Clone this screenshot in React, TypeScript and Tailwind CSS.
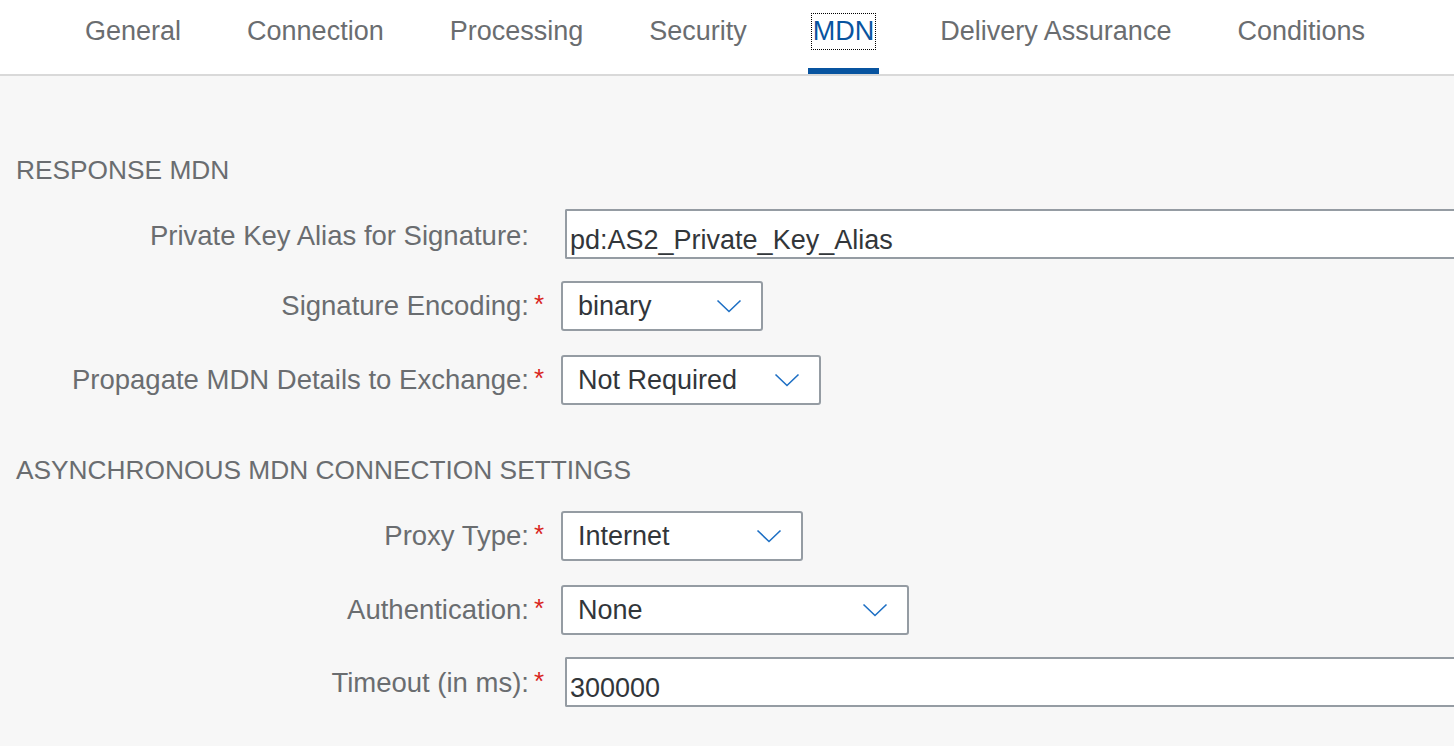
import React from "react";

const FONT = { fontFamily: '"Liberation Sans", Arial, sans-serif' };

const tabs = ["General", "Connection", "Processing", "Security", "MDN", "Delivery Assurance", "Conditions"];

function Chevron() {
  return (
    <svg width="26" height="14" viewBox="0 0 26 14" fill="none">
      <polyline points="1.5,1.5 13,12.5 24.5,1.5" stroke="#1d6fc4" strokeWidth="1.6" strokeLinejoin="miter" />
    </svg>
  );
}

function Label({ text, required = true, offset = 0 }: { text: string; required?: boolean; offset?: number }) {
  return (
    <div className="flex items-center" style={offset ? { paddingTop: offset } : undefined}>
      <div className="w-[529px] text-right text-[27.5px] text-[#6a6d70] leading-[32px] whitespace-nowrap">{text}</div>
      <div className="w-[32px] pl-[5px] h-[32px] flex items-start">
        {required ? <span className="text-[#d9251d] text-[26px] leading-[28px]">*</span> : null}
      </div>
    </div>
  );
}

function Select({ value, width }: { value: string; width: number }) {
  return (
    <div
      className="h-[50px] bg-white border-2 border-[#959ca3] rounded-[3px] flex items-center justify-between pl-[15px] pr-[19px]"
      style={{ width }}
    >
      <span className="text-[27px] text-[#32363a] leading-[32px]">{value}</span>
      <Chevron />
    </div>
  );
}

function TextInput({ value }: { value: string }) {
  return (
    <div className="ml-[4px] flex-1 h-[50px] bg-white border-2 border-r-0 border-[#959ca3] rounded-l-[2px] flex items-center pl-[3px] pt-[12px]">
      <span className="text-[27px] text-[#32363a] leading-[32px] whitespace-nowrap">{value}</span>
    </div>
  );
}

export default function App() {
  return (
    <div className="w-[1454px] h-[746px] overflow-hidden bg-[#f7f7f7]" style={FONT}>
      <div className="h-[76px] bg-white border-b-2 border-[#d9d9d9] flex pl-[80px] gap-[56px]">
        {tabs.map((t) => {
          const active = t === "MDN";
          return (
            <div key={t} className="relative h-[74px] px-[5px] flex items-start pt-[14px]">
              {active ? (
                <span className="text-[27px] leading-[35px] text-[#0854a0] outline-1 outline-dotted outline-black px-[1px] -mx-[1px]">
                  {t}
                </span>
              ) : (
                <span className="text-[27px] leading-[35px] text-[#6a6d70] whitespace-nowrap">{t}</span>
              )}
              {active ? <div className="absolute left-0 right-0 bottom-0 h-[6px] bg-[#0854a0]" /> : null}
            </div>
          );
        })}
      </div>

      <div className="pt-[78px]">
        <div className="pl-[16px] h-[32px] text-[26.3px] leading-[32px] text-[#6a6d70]">RESPONSE MDN</div>

        <div className="mt-[23px] h-[50px] flex items-center">
          <Label text="Private Key Alias for Signature:" required={false} offset={4} />
          <TextInput value="pd:AS2_Private_Key_Alias" />
        </div>

        <div className="mt-[22px] h-[50px] flex items-center">
          <Label text="Signature Encoding:" />
          <Select value="binary" width={202} />
        </div>

        <div className="mt-[24px] h-[50px] flex items-center">
          <Label text="Propagate MDN Details to Exchange:" />
          <Select value="Not Required" width={260} />
        </div>

        <div className="mt-[49px] pl-[16px] h-[32px] text-[26.3px] leading-[32px] text-[#6a6d70] whitespace-nowrap">
          ASYNCHRONOUS MDN CONNECTION SETTINGS
        </div>

        <div className="mt-[25px] h-[50px] flex items-center">
          <Label text="Proxy Type:" />
          <Select value="Internet" width={242} />
        </div>

        <div className="mt-[24px] h-[50px] flex items-center">
          <Label text="Authentication:" />
          <Select value="None" width={348} />
        </div>

        <div className="mt-[22px] h-[50px] flex items-center">
          <Label text="Timeout (in ms):" offset={2} />
          <TextInput value="300000" />
        </div>
      </div>
    </div>
  );
}
